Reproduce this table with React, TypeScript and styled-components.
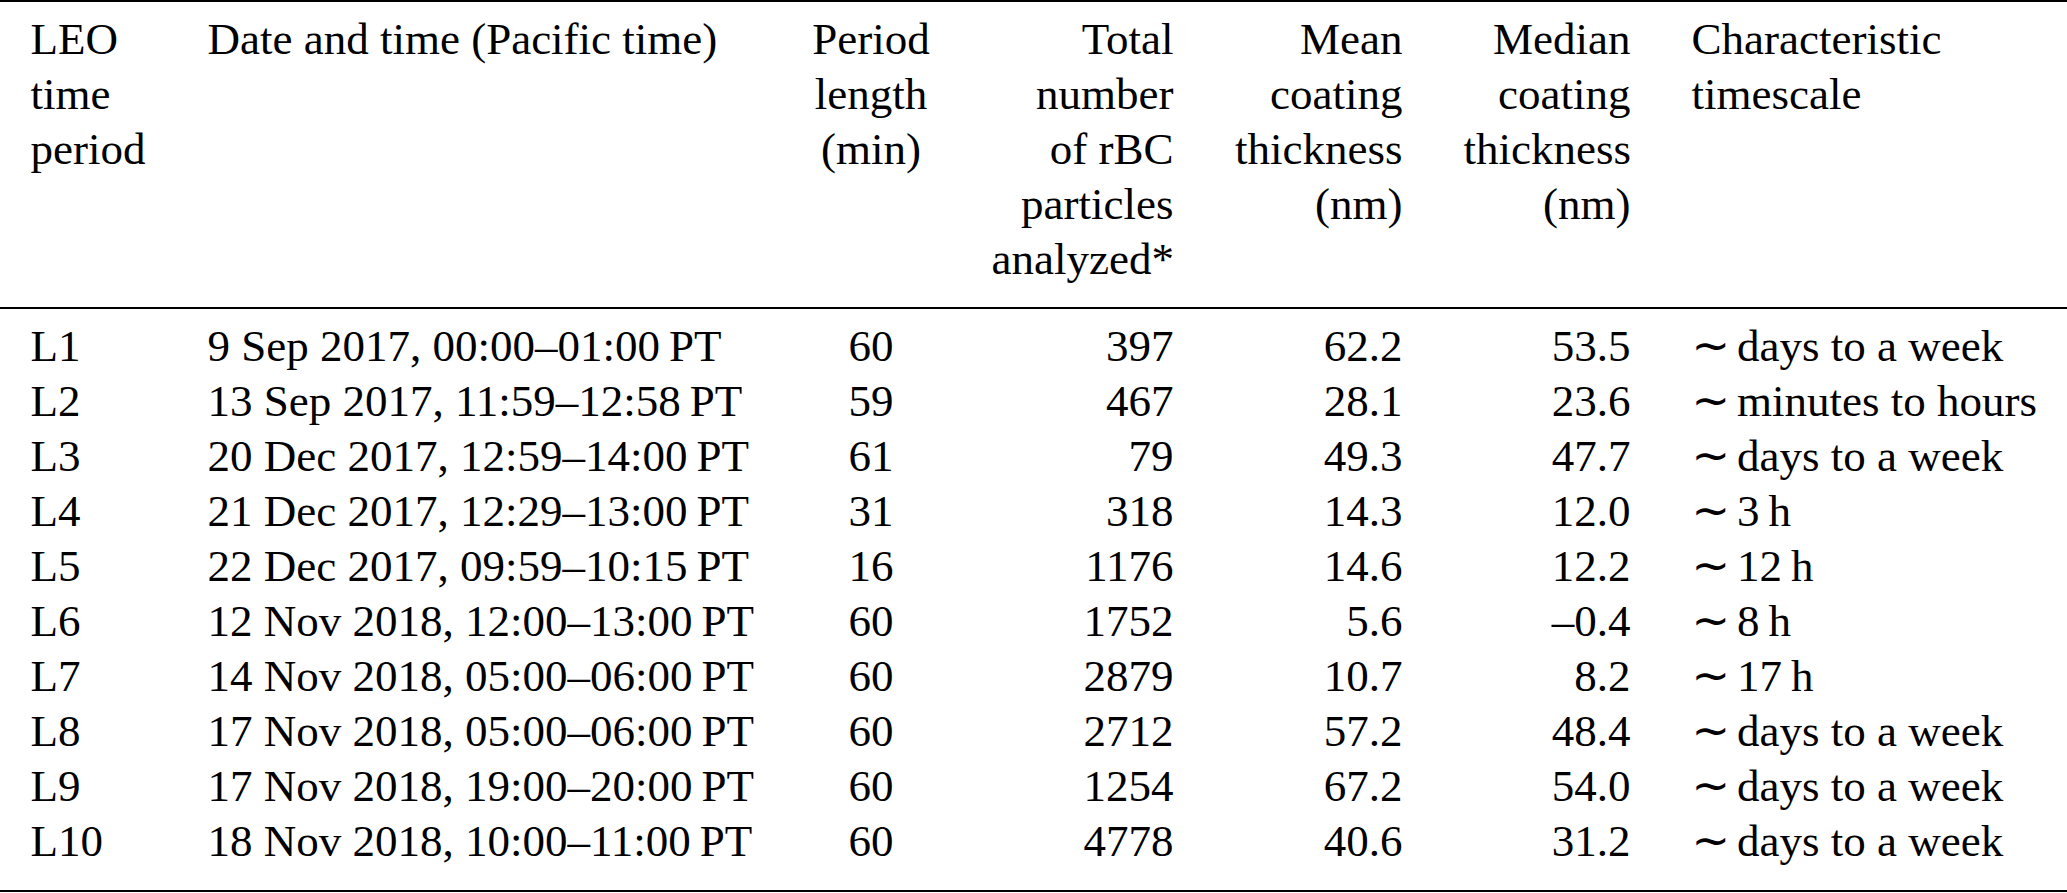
import React from "react";
import styled, { createGlobalStyle } from "styled-components";

type Align = "left" | "center" | "right";

interface Row {
  id: string;
  date: string;
  length: string;
  total: string;
  mean: string;
  median: string;
  timescale: string;
}

const ROWS: Row[] = [
  { id: "L1", date: "9 Sep 2017, 00:00–01:00\u2009PT", length: "60", total: "397", mean: "62.2", median: "53.5", timescale: "days to a week" },
  { id: "L2", date: "13 Sep 2017, 11:59–12:58\u2009PT", length: "59", total: "467", mean: "28.1", median: "23.6", timescale: "minutes to hours" },
  { id: "L3", date: "20 Dec 2017, 12:59–14:00\u2009PT", length: "61", total: "79", mean: "49.3", median: "47.7", timescale: "days to a week" },
  { id: "L4", date: "21 Dec 2017, 12:29–13:00\u2009PT", length: "31", total: "318", mean: "14.3", median: "12.0", timescale: "3\u2009h" },
  { id: "L5", date: "22 Dec 2017, 09:59–10:15\u2009PT", length: "16", total: "1176", mean: "14.6", median: "12.2", timescale: "12\u2009h" },
  { id: "L6", date: "12 Nov 2018, 12:00–13:00\u2009PT", length: "60", total: "1752", mean: "5.6", median: "–0.4", timescale: "8\u2009h" },
  { id: "L7", date: "14 Nov 2018, 05:00–06:00\u2009PT", length: "60", total: "2879", mean: "10.7", median: "8.2", timescale: "17\u2009h" },
  { id: "L8", date: "17 Nov 2018, 05:00–06:00\u2009PT", length: "60", total: "2712", mean: "57.2", median: "48.4", timescale: "days to a week" },
  { id: "L9", date: "17 Nov 2018, 19:00–20:00\u2009PT", length: "60", total: "1254", mean: "67.2", median: "54.0", timescale: "days to a week" },
  { id: "L10", date: "18 Nov 2018, 10:00–11:00\u2009PT", length: "60", total: "4778", mean: "40.6", median: "31.2", timescale: "days to a week" },
];

const COLUMNS: { width: number; align: Align; head: string[] }[] = [
  { width: 177, align: "left", head: ["LEO", "time", "period"] },
  { width: 604, align: "left", head: ["Date and time (Pacific time)"] },
  { width: 180, align: "center", head: ["Period", "length", "(min)"] },
  { width: 243, align: "right", head: ["Total", "number", "of rBC", "particles", "analyzed*"] },
  { width: 229, align: "right", head: ["Mean", "coating", "thickness", "(nm)"] },
  { width: 228, align: "right", head: ["Median", "coating", "thickness", "(nm)"] },
  { width: 406, align: "left", head: ["Characteristic", "timescale"] },
];

const GlobalStyle = createGlobalStyle`
  html, body {
    margin: 0;
    padding: 0;
    background: #ffffff;
  }
`;

const Table = styled.table`
  width: 2067px;
  table-layout: fixed;
  border-collapse: collapse;
  font-family: "Liberation Serif", "Times New Roman", serif;
  font-size: 45px;
  line-height: 55px;
  color: #000000;
  border-top: 2px solid #000000;
  border-bottom: 2px solid #000000;
`;

const HeadRow = styled.tr`
  border-bottom: 2px solid #000000;
`;

const HeadCell = styled.th<{ $align: Align }>`
  padding: 10px 30.5px 20px;
  text-align: ${(p) => p.$align};
  vertical-align: top;
  font-weight: normal;
  white-space: nowrap;
`;

const BodyRow = styled.tr`
  &:first-child td {
    padding-top: 10px;
  }
  &:last-child td {
    padding-bottom: 21px;
  }
`;

const Cell = styled.td<{ $align: Align }>`
  padding: 0 30.5px;
  height: 55px;
  text-align: ${(p) => p.$align};
  white-space: nowrap;
`;

const Sim = styled.span`
  font-family: "DejaVu Sans", sans-serif;
  font-size: 46px;
  line-height: 0;
  margin-right: 7px;
`;

const App: React.FC = () => {
  return (
    <>
      <GlobalStyle />
      <Table>
        <colgroup>
          {COLUMNS.map((c, i) => (
            <col key={i} style={{ width: c.width }} />
          ))}
        </colgroup>
        <thead>
          <HeadRow>
            {COLUMNS.map((c, i) => (
              <HeadCell key={i} $align={c.align}>
                {c.head.map((line, j) => (
                  <React.Fragment key={j}>
                    {j > 0 && <br />}
                    {line}
                  </React.Fragment>
                ))}
              </HeadCell>
            ))}
          </HeadRow>
        </thead>
        <tbody>
          {ROWS.map((r) => (
            <BodyRow key={r.id}>
              <Cell $align="left">{r.id}</Cell>
              <Cell $align="left">{r.date}</Cell>
              <Cell $align="center">{r.length}</Cell>
              <Cell $align="right">{r.total}</Cell>
              <Cell $align="right">{r.mean}</Cell>
              <Cell $align="right">{r.median}</Cell>
              <Cell $align="left">
                <Sim>∼</Sim>
                {r.timescale}
              </Cell>
            </BodyRow>
          ))}
        </tbody>
      </Table>
    </>
  );
};

export default App;
